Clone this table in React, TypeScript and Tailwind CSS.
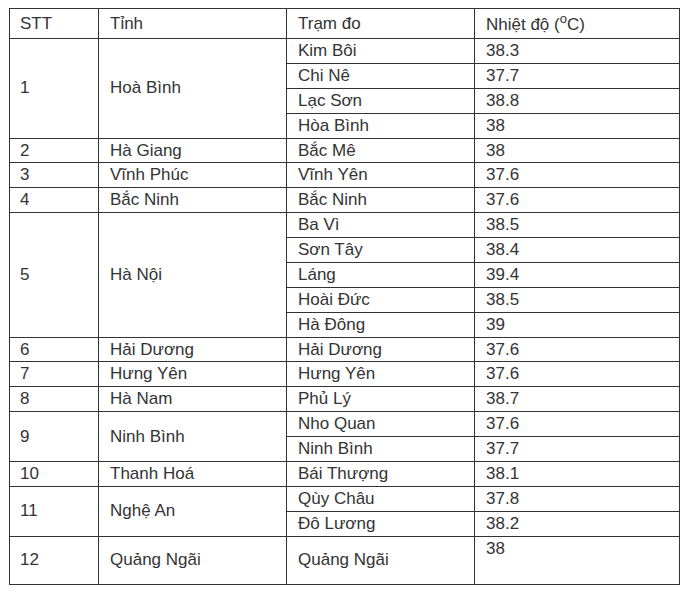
type Station = { name: string; temp: string };
type Province = { stt: number; name: string; stations: Station[] };

const data: Province[] = [
  {
    stt: 1,
    name: "Hoà Bình",
    stations: [
      { name: "Kim Bôi", temp: "38.3" },
      { name: "Chi Nê", temp: "37.7" },
      { name: "Lạc Sơn", temp: "38.8" },
      { name: "Hòa Bình", temp: "38" },
    ],
  },
  { stt: 2, name: "Hà Giang", stations: [{ name: "Bắc Mê", temp: "38" }] },
  { stt: 3, name: "Vĩnh Phúc", stations: [{ name: "Vĩnh Yên", temp: "37.6" }] },
  { stt: 4, name: "Bắc Ninh", stations: [{ name: "Bắc Ninh", temp: "37.6" }] },
  {
    stt: 5,
    name: "Hà Nội",
    stations: [
      { name: "Ba Vì", temp: "38.5" },
      { name: "Sơn Tây", temp: "38.4" },
      { name: "Láng", temp: "39.4" },
      { name: "Hoài Đức", temp: "38.5" },
      { name: "Hà Đông", temp: "39" },
    ],
  },
  { stt: 6, name: "Hải Dương", stations: [{ name: "Hải Dương", temp: "37.6" }] },
  { stt: 7, name: "Hưng Yên", stations: [{ name: "Hưng Yên", temp: "37.6" }] },
  { stt: 8, name: "Hà Nam", stations: [{ name: "Phủ Lý", temp: "38.7" }] },
  {
    stt: 9,
    name: "Ninh Bình",
    stations: [
      { name: "Nho Quan", temp: "37.6" },
      { name: "Ninh Bình", temp: "37.7" },
    ],
  },
  { stt: 10, name: "Thanh Hoá", stations: [{ name: "Bái Thượng", temp: "38.1" }] },
  {
    stt: 11,
    name: "Nghệ An",
    stations: [
      { name: "Qùy Châu", temp: "37.8" },
      { name: "Đô Lương", temp: "38.2" },
    ],
  },
];

const cell = "border border-[#333] py-0 leading-[23.87px]";

export default function App() {
  return (
    <div className="w-[684px] h-[592px] bg-white pt-[8px] pl-[9px] text-[17px] text-[#333] font-['Liberation_Sans',Arial,sans-serif]">
      <table className="table-fixed border-collapse w-[670px]">
        <colgroup>
          <col className="w-[89px]" />
          <col className="w-[188px]" />
          <col className="w-[188px]" />
          <col className="w-[205px]" />
        </colgroup>
        <thead>
          <tr className="h-[30px]">
            <td className={`${cell} pl-[10px]`}>STT</td>
            <td className={`${cell} pl-[11px]`}>Tỉnh</td>
            <td className={`${cell} pl-[11px]`}>Trạm đo</td>
            <td className={`${cell} pl-[11px] align-bottom`}>
              Nhiệt độ (<span className="text-[13px] relative -top-[7px]">o</span>C)
            </td>
          </tr>
        </thead>
        <tbody>
          {data.map((p) =>
            p.stations.map((s, i) => (
              <tr key={p.stt + s.name}>
                {i === 0 && (
                  <>
                    <td rowSpan={p.stations.length} className={`${cell} pl-[10px]`}>
                      {p.stt}
                    </td>
                    <td rowSpan={p.stations.length} className={`${cell} pl-[11px]`}>
                      {p.name}
                    </td>
                  </>
                )}
                <td className={`${cell} pl-[11px]`}>{s.name}</td>
                <td className={`${cell} pl-[11px]`}>{s.temp}</td>
              </tr>
            ))
          )}
          {/* last row is taller, temp sits on top */}
          <tr className="h-[48.74px]">
            <td className={`${cell} pl-[10px]`}>12</td>
            <td className={`${cell} pl-[11px]`}>Quảng Ngãi</td>
            <td className={`${cell} pl-[11px]`}>Quảng Ngãi</td>
            <td className={`${cell} pl-[11px] align-top`}>38</td>
          </tr>
        </tbody>
      </table>
    </div>
  );
}
